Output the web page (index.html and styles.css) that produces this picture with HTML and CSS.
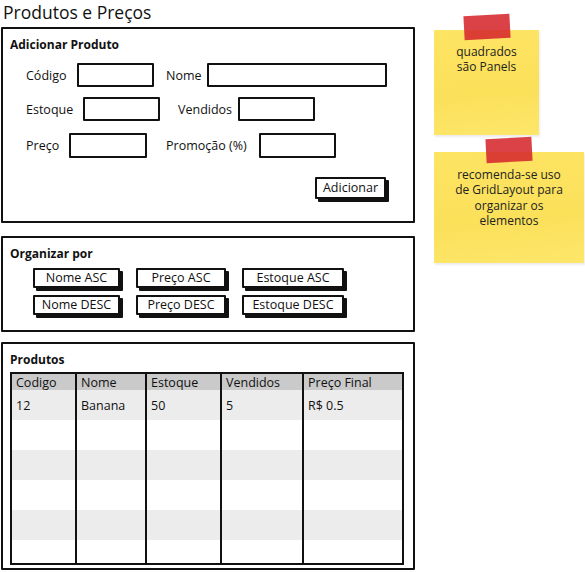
FILE: index.html
```html
<!DOCTYPE html>
<html lang="pt">
<head>
    <meta charset="UTF-8">
    <title>Produtos e Preços</title>
    <link rel="stylesheet" href="styles.css">
</head>
<body>
    <div class="page">
        <div class="main">
            <h1 class="title">Produtos e Preços</h1>

            <!-- Adicionar -->
            <div class="panel panel-add">
                <div class="panel-title">Adicionar Produto</div>
                <div class="form-row row-1">
                    <label class="lbl lbl-codigo">Código</label>
                    <input type="text" class="field field-codigo">
                    <label class="lbl lbl-nome">Nome</label>
                    <input type="text" class="field field-nome">
                </div>
                <div class="form-row row-2">
                    <label class="lbl lbl-estoque">Estoque</label>
                    <input type="text" class="field field-estoque">
                    <label class="lbl lbl-vendidos">Vendidos</label>
                    <input type="text" class="field field-vendidos">
                </div>
                <div class="form-row row-3">
                    <label class="lbl lbl-preco">Preço</label>
                    <input type="text" class="field field-preco">
                    <label class="lbl lbl-promo">Promoção (%)</label>
                    <input type="text" class="field field-promo">
                </div>
                <div class="add-row">
                    <button class="btn btn-add">Adicionar</button>
                </div>
            </div>

            <!-- Ordenar -->
            <div class="panel panel-sort">
                <div class="panel-title">Organizar por</div>
                <div class="sort-grid">
                    <button class="btn">Nome ASC</button>
                    <button class="btn">Preço ASC</button>
                    <button class="btn">Estoque ASC</button>
                    <button class="btn">Nome DESC</button>
                    <button class="btn">Preço DESC</button>
                    <button class="btn">Estoque DESC</button>
                </div>
            </div>

            <!-- Tabela -->
            <div class="panel panel-list">
                <div class="panel-title">Produtos</div>
                <table class="products">
                    <thead>
                        <tr>
                            <th class="c1">Codigo</th>
                            <th class="c2">Nome</th>
                            <th class="c3">Estoque</th>
                            <th class="c4">Vendidos</th>
                            <th class="c5">Preço Final</th>
                        </tr>
                    </thead>
                    <tbody>
                        <tr><td>12</td><td>Banana</td><td>50</td><td>5</td><td>R$ 0.5</td></tr>
                        <tr><td></td><td></td><td></td><td></td><td></td></tr>
                        <tr><td></td><td></td><td></td><td></td><td></td></tr>
                        <tr><td></td><td></td><td></td><td></td><td></td></tr>
                        <tr><td></td><td></td><td></td><td></td><td></td></tr>
                        <tr class="last"><td></td><td></td><td></td><td></td><td></td></tr>
                    </tbody>
                </table>
            </div>
        </div>

        <div class="notes">
            <div class="note note-1">
                <span class="tape"></span>
                <div class="note-line">quadrados</div>
                <div class="note-line">são Panels</div>
            </div>
            <div class="note note-2">
                <span class="tape"></span>
                <div class="note-line">recomenda-se uso</div>
                <div class="note-line">de GridLayout para</div>
                <div class="note-line">organizar os</div>
                <div class="note-line">elementos</div>
            </div>
        </div>
    </div>
</body>
</html>
```

FILE: styles.css
```css
* {
    box-sizing: border-box;
}

body {
    margin: 0;
    background: #fff;
    font-family: "Open Sans", Lato, sans-serif;
    color: #111;
}

.page {
    display: flex;
    align-items: flex-start;
}

.main {
    width: 416px;
    padding-left: 1px;
}

.title {
    margin: 0;
    padding-left: 2px;
    font-size: 17.5px;
    font-weight: normal;
    line-height: 25px;
    height: 27px;
}

/* panels */
.panel {
    border: 2px solid #111;
    border-radius: 1px;
    width: 414px;
    background: #fff;
}

.panel-title {
    font-size: 12px;
    font-weight: bold;
    line-height: 16px;
    padding-left: 7px;
}

.panel-add {
    height: 196px;
    padding-top: 8px;
}

.form-row {
    display: flex;
    align-items: center;
    padding-left: 23px;
}

.row-1 { margin-top: 10px; }
.row-2 { margin-top: 10px; }
.row-3 { margin-top: 12px; }

.lbl {
    font-size: 12.5px;
}

.field {
    height: 24px;
    border: 2px solid #111;
    border-radius: 1px;
    background: #fff;
    padding: 0;
}

.lbl-codigo { width: 51px; }
.field-codigo { width: 77px; }
.lbl-nome { width: 41px; margin-left: 12px; }
.field-nome { width: 180px; }

.lbl-estoque { width: 57px; }
.field-estoque { width: 77px; }
.lbl-vendidos { width: 60px; margin-left: 18px; }
.field-vendidos { width: 77px; }

.lbl-preco { width: 43px; }
.field-preco { width: 78px; height: 25px; }
.lbl-promo { width: 93px; margin-left: 19px; }
.field-promo { width: 77px; height: 25px; }

.add-row {
    display: flex;
    justify-content: flex-end;
    padding-right: 27px;
    margin-top: 19px;
}

.btn {
    font-family: inherit;
    font-size: 12.5px;
    color: #111;
    background: #fff;
    border: 2px solid #111;
    border-radius: 1px;
    box-shadow: 3px 3px 0 #111;
    padding: 0;
    height: 20px;
    line-height: 16px;
    cursor: pointer;
}

.btn-add {
    width: 71px;
    height: 22px;
}

/* sort */
.panel-sort {
    margin-top: 13px;
    height: 96px;
    padding-top: 8px;
}

.sort-grid {
    display: grid;
    grid-template-columns: 87px 90px 102px;
    column-gap: 16px;
    row-gap: 7px;
    padding-left: 30px;
    margin-top: 6px;
}

/* table */
.panel-list {
    margin-top: 10px;
    height: 228px;
    padding-top: 8px;
}

.products {
    margin: 4px 0 0 7px;
    width: 394px;
    border-collapse: collapse;
    border: 2px solid #111;
    font-size: 12.5px;
}

.products th,
.products td {
    text-align: left;
    font-weight: normal;
    padding: 0 0 0 4px;
    border-left: 2px solid #111;
    height: 30px;
}

.products th {
    background: #cacaca;
    height: 17px;
    line-height: 15px;
}

.products tbody tr:nth-child(odd) { background: #ececec; }
.products tbody tr.last td { height: 24px; }

.c1 { width: 65px; }
.c2 { width: 70px; }
.c3 { width: 75px; }
.c4 { width: 82px; }

/* sticky notes */
.notes {
    margin-left: 18px;
    padding-top: 30px;
    display: flex;
    flex-direction: column;
    gap: 17px;
}

.note {
    position: relative;
    background: linear-gradient(175deg, #fde463 0%, #fbe05a 60%, #fde66a 100%);
    box-shadow: 1px 2px 2px rgba(0, 0, 0, 0.08);
    font-size: 12px;
    text-align: center;
    color: #222;
}

.note-line {
    height: 15.4px;
    line-height: 15.4px;
}

.note-1 {
    width: 105px;
    height: 105px;
    padding-top: 14px;
}

.note-2 {
    width: 150px;
    height: 111px;
    padding-top: 15px;
}

.tape {
    position: absolute;
    width: 46px;
    height: 24px;
    background: rgba(214, 40, 45, 0.88);
    transform: rotate(-3deg);
}

.note-1 .tape { left: 30px; top: -15px; }
.note-2 .tape { left: 52px; top: -14px; }
```
